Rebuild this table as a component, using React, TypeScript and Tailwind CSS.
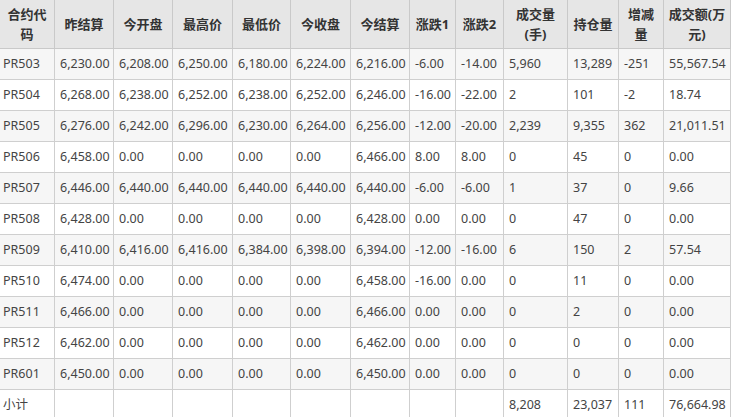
import React from 'react';

const cols = 'grid grid-cols-[55px_59px_59px_60px_58px_60px_59px_46px_48px_64px_51px_45px_1fr]';

const headers: React.ReactNode[] = [
  <>合约代<br />码</>,
  '昨结算',
  '今开盘',
  '最高价',
  '最低价',
  '今收盘',
  '今结算',
  '涨跌1',
  '涨跌2',
  <>成交量<br />(手)</>,
  '持仓量',
  <>增减<br />量</>,
  <>成交额(万<br />元)</>,
];

const rows: string[][] = [
  ['PR503', '6,230.00', '6,208.00', '6,250.00', '6,180.00', '6,224.00', '6,216.00', '-6.00', '-14.00', '5,960', '13,289', '-251', '55,567.54'],
  ['PR504', '6,268.00', '6,238.00', '6,252.00', '6,238.00', '6,252.00', '6,246.00', '-16.00', '-22.00', '2', '101', '-2', '18.74'],
  ['PR505', '6,276.00', '6,242.00', '6,296.00', '6,230.00', '6,264.00', '6,256.00', '-12.00', '-20.00', '2,239', '9,355', '362', '21,011.51'],
  ['PR506', '6,458.00', '0.00', '0.00', '0.00', '0.00', '6,466.00', '8.00', '8.00', '0', '45', '0', '0.00'],
  ['PR507', '6,446.00', '6,440.00', '6,440.00', '6,440.00', '6,440.00', '6,440.00', '-6.00', '-6.00', '1', '37', '0', '9.66'],
  ['PR508', '6,428.00', '0.00', '0.00', '0.00', '0.00', '6,428.00', '0.00', '0.00', '0', '47', '0', '0.00'],
  ['PR509', '6,410.00', '6,416.00', '6,416.00', '6,384.00', '6,398.00', '6,394.00', '-12.00', '-16.00', '6', '150', '2', '57.54'],
  ['PR510', '6,474.00', '0.00', '0.00', '0.00', '0.00', '6,458.00', '-16.00', '0.00', '0', '11', '0', '0.00'],
  ['PR511', '6,466.00', '0.00', '0.00', '0.00', '0.00', '6,466.00', '0.00', '0.00', '0', '2', '0', '0.00'],
  ['PR512', '6,462.00', '0.00', '0.00', '0.00', '0.00', '6,462.00', '0.00', '0.00', '0', '0', '0', '0.00'],
  ['PR601', '6,450.00', '0.00', '0.00', '0.00', '0.00', '6,450.00', '0.00', '0.00', '0', '0', '0', '0.00'],
  ['小计', '', '', '', '', '', '', '', '', '8,208', '23,037', '111', '76,664.98'],
];

export default function App() {
  return (
    <div
      className="w-[731px] h-[417px] overflow-hidden bg-white text-[12.5px] text-[#444]"
      style={{ fontFamily: '"Noto Sans", "Noto Sans CJK SC", sans-serif' }}
    >
      {/* header */}
      <div className={`${cols} h-[49px] bg-[#e6e6e6]`}>
        {headers.map((h, i) => (
          <div
            key={i}
            className="flex items-center justify-center text-center leading-[20px] font-bold text-[#333] text-[13px] border-r border-b border-[#c9c9c9]"
          >
            <span>{h}</span>
          </div>
        ))}
      </div>

      {rows.map((r, ri) => (
        <div key={ri} className={`${cols} h-[31px] ${ri % 2 === 0 && ri < 11 ? 'bg-[#f6f6f6]' : 'bg-white'}`}>
          {r.map((c, ci) => (
            <div
              key={ci}
              className={`flex items-center whitespace-nowrap border-r border-b border-[#cfcfcf] ${ci === 0 ? 'pl-[3px]' : 'pl-[5px]'}`}
            >
              {c}
            </div>
          ))}
        </div>
      ))}
    </div>
  );
}
